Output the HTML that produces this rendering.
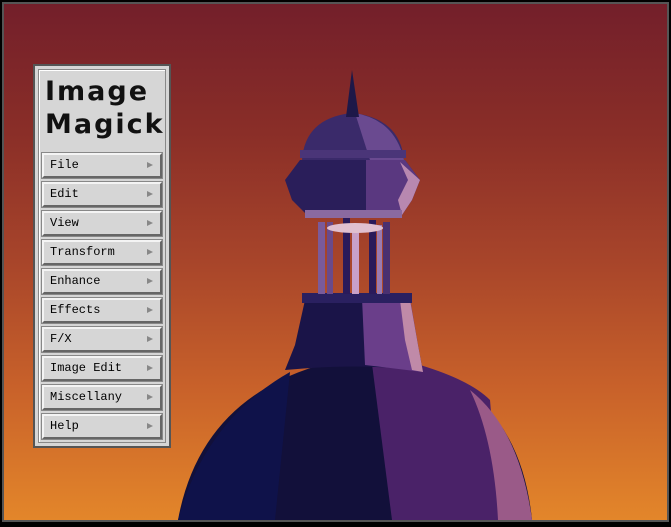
<!DOCTYPE html>
<html><head><style>
body{margin:0;width:671px;height:527px;background:#000;position:relative;overflow:hidden;font-family:"Liberation Mono",monospace}
#frame{position:absolute;left:2px;top:2px;width:663px;height:516px;border:2px solid #555}
#img{position:absolute;left:4px;top:4px;width:663px;height:516px;background:linear-gradient(#731f2a 0%,#8a2e28 25%,#a8452a 50%,#c9622a 75%,#e3862a 100%);overflow:hidden}
#panel{position:absolute;left:33px;top:64px;width:134px;height:380px;background:#d6d6d6;border:2px solid #555;}
#inner{position:absolute;left:3px;top:3px;right:3px;bottom:3px;border:1px solid #888;box-shadow:inset 1px 1px 0 #fff}
.logo{position:absolute;left:10px;top:9px;font-family:"DejaVu Sans",sans-serif;font-size:27px;line-height:33px;font-weight:bold;color:#111;letter-spacing:2px}
.btn{position:absolute;left:7px;height:21px;background:#d6d6d6;border:2px solid;border-color:#f4f4f4 #666 #666 #f4f4f4;outline:1px solid #888;font-size:12px;line-height:21px;color:#000;padding-left:6px;box-sizing:content-box;width:110px}
.btn:after{content:"";position:absolute;right:7px;top:7px;border-left:6px solid #888;border-top:3.5px solid transparent;border-bottom:3.5px solid transparent}
</style></head><body>
<div id="frame"></div>
<div id="img">
<svg width="663" height="516" style="position:absolute;left:0;top:0">
<g transform="translate(-4,-4)">
<path d="M178 520 Q200 400 320 365 L420 365 Q520 400 532 520Z" fill="#12103a"/>
<path d="M178 520 Q205 420 290 372 L275 520Z" fill="#0f124a"/>
<path d="M372 364 L420 365 Q470 380 490 400 L500 520 L392 520Z" fill="#4a2268"/>
<path d="M470 390 Q520 430 532 520 L498 520 Q494 440 470 390Z" fill="#9a5a88"/>
<path d="M285 370 L295 345 L305 300 L410 300 L418 345 L423 372 Q370 362 285 370Z" fill="#1a1448"/>
<path d="M362 298 L410 298 L418 345 L423 372 L365 365Z" fill="#6a3e8a"/>
<path d="M400 300 L410 300 L418 345 L423 372 L412 370 L405 340Z" fill="#c08aa8"/>
<rect x="302" y="293" width="110" height="10" fill="#2a2060"/>
<rect x="318" y="222" width="7" height="72" fill="#7a5a9a"/>
<rect x="327" y="222" width="6" height="72" fill="#6a4a8a"/>
<rect x="343" y="218" width="7" height="76" fill="#2a1a5a"/>
<rect x="352" y="232" width="7" height="62" fill="#c8a0c8"/>
<rect x="369" y="220" width="7" height="74" fill="#2a1a5a"/>
<rect x="377" y="225" width="5" height="69" fill="#9a7ab0"/>
<rect x="383" y="222" width="7" height="72" fill="#4a3070"/>
<ellipse cx="355" cy="228" rx="28" ry="5" fill="#e0c0d0"/>
<path d="M285 180 L300 160 L405 160 L420 180 L412 200 L402 215 L310 218 L292 200Z" fill="#2a1e5a"/>
<path d="M366 160 L405 160 L420 180 L412 200 L402 215 L366 216Z" fill="#5a3880"/>
<path d="M400 162 L420 180 L412 200 L402 215 L398 200 L408 180Z" fill="#b888b0"/>
<rect x="305" y="210" width="97" height="8" fill="#8a6aa0"/>
<path d="M302 160 Q305 118 352 113 Q400 118 404 160Z" fill="#3a2a6a"/>
<path d="M355 113 Q395 120 404 160 L370 160Z" fill="#6a4a90"/>
<rect x="300" y="150" width="106" height="8" fill="#4a3578"/>
<path d="M352 70 L346 117 L359 117Z" fill="#1e1848"/>
</g>
</svg>
<div id="panel" style="left:29px;top:60px"><div id="inner"></div>
<div class="logo">Image<br>Magick</div>
<div class="btn" style="top:87px">File</div>
<div class="btn" style="top:116px">Edit</div>
<div class="btn" style="top:145px">View</div>
<div class="btn" style="top:174px">Transform</div>
<div class="btn" style="top:203px">Enhance</div>
<div class="btn" style="top:232px">Effects</div>
<div class="btn" style="top:261px">F/X</div>
<div class="btn" style="top:290px">Image Edit</div>
<div class="btn" style="top:319px">Miscellany</div>
<div class="btn" style="top:348px">Help</div>
</div>
</div>
</body></html>
